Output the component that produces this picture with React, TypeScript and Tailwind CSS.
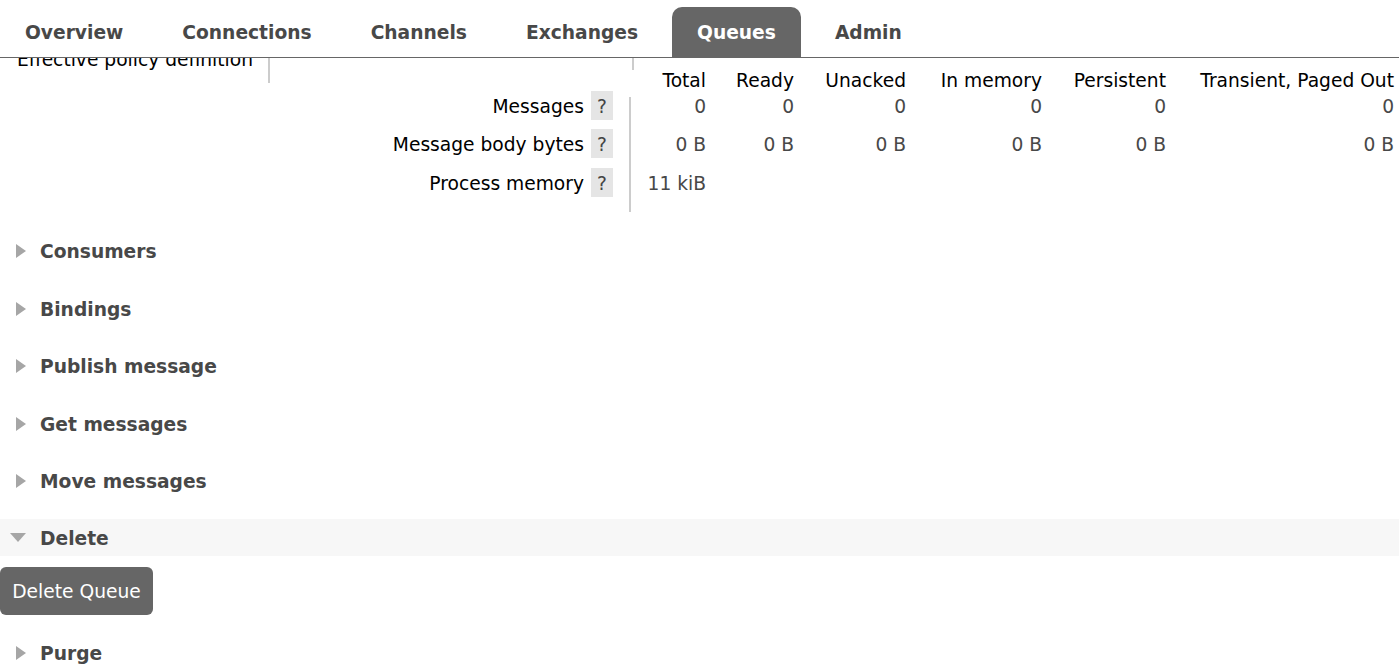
import React from 'react';

const tabs = ['Overview', 'Connections', 'Channels', 'Exchanges', 'Queues', 'Admin'];

const columns = [
  { name: 'Total', w: 'w-[75px]' },
  { name: 'Ready', w: 'w-[88px]' },
  { name: 'Unacked', w: 'w-[112px]' },
  { name: 'In memory', w: 'w-[136px]' },
  { name: 'Persistent', w: 'w-[124px]' },
  { name: 'Transient, Paged Out', w: 'w-[228px]' },
];

const rows = [
  { label: 'Messages', h: 'h-[38px]', values: ['0', '0', '0', '0', '0', '0'] },
  { label: 'Message body bytes', h: 'h-[39px]', values: ['0 B', '0 B', '0 B', '0 B', '0 B', '0 B'] },
  { label: 'Process memory', h: 'h-[38px]', values: ['11 kiB', '', '', '', '', ''] },
];

const sections = [
  { title: 'Consumers', mt: 'mt-[20px]' },
  { title: 'Bindings', mt: 'mt-[21px]' },
  { title: 'Publish message', mt: 'mt-[20px]' },
  { title: 'Get messages', mt: 'mt-[21px]' },
  { title: 'Move messages', mt: 'mt-[20px]' },
];

const Closed = () => (
  <svg width="10" height="14" viewBox="0 0 10 14" className="ml-[16px] mr-[14px] shrink-0">
    <polygon points="0,0 10,7 0,14" fill="#a6a6a6" />
  </svg>
);

const Open = () => (
  <svg width="16" height="9" viewBox="0 0 16 9" className="ml-[10px] mr-[14px] shrink-0">
    <polygon points="0,0 16,0 8,9" fill="#a6a6a6" />
  </svg>
);

const Heading: React.FC<{ title: string; open?: boolean; className?: string }> = ({ title, open, className }) => (
  <div className={`flex h-[37px] items-center ${open ? 'bg-[#f7f7f7]' : ''} ${className ?? ''}`}>
    {open ? <Open /> : <Closed />}
    <h2 className="pt-[2px] text-[18.67px] font-bold leading-[22px] text-[#484848]">{title}</h2>
  </div>
);

const App: React.FC = () => {
  return (
    <div className="h-[664px] overflow-hidden bg-white font-['DejaVu_Sans',Verdana,sans-serif] text-[18.67px]">
      <nav className="relative z-10 flex h-[58px] gap-[9px] border-b border-[#666] bg-white pt-[7px]">
        {tabs.map((t) => (
          <div
            key={t}
            className={`flex h-[50px] items-center rounded-t-[10px] px-[25px] pt-[2px] font-bold ${
              t === 'Queues' ? 'bg-[#666] text-white' : 'text-[#484848]'
            }`}
          >
            {t}
          </div>
        ))}
      </nav>

      <div className="flex">
        <div className="h-[25px] w-[270px] shrink-0 border-r-2 border-[#ccc]">
          <div className="-mt-[9px] pl-[17px] leading-[22px] text-black">Effective policy definition</div>
        </div>

        <div className="flex flex-col">
          <div className="ml-[362px] h-[12px] w-[2px] bg-[#ccc]" />

          <div className="flex h-[27px] leading-[22px] text-black">
            <div className="w-[361px] shrink-0" />
            {columns.map((c) => (
              <div key={c.name} className={`${c.w} shrink-0 text-right`}>
                {c.name}
              </div>
            ))}
          </div>

          {rows.map((r) => (
            <div key={r.label} className={`flex ${r.h} leading-[20px]`}>
              <div className="w-[314px] shrink-0 text-right text-black">{r.label}</div>
              <div className="-mt-[6px] ml-[7px] h-[29px] w-[22px] shrink-0 bg-[#e5e5e5] pt-[6px] text-center text-[#444]">?</div>
              <div className="ml-[16px] w-[2px] shrink-0 bg-[#ccc]" />
              {columns.map((c, i) => (
                <div key={c.name} className={`${c.w} shrink-0 text-right text-[#484848]`}>
                  {r.values[i]}
                </div>
              ))}
            </div>
          ))}
        </div>
      </div>

      {sections.map((s) => (
        <Heading key={s.title} title={s.title} className={s.mt} />
      ))}

      <Heading title="Delete" open className="mt-[20px]" />
      <button className="mt-[11px] flex h-[48px] w-[153px] items-center justify-center rounded-[6px] bg-[#666] pt-[2px] text-white">
        Delete Queue
      </button>

      <Heading title="Purge" className="mt-[19px]" />
    </div>
  );
};

export default App;
